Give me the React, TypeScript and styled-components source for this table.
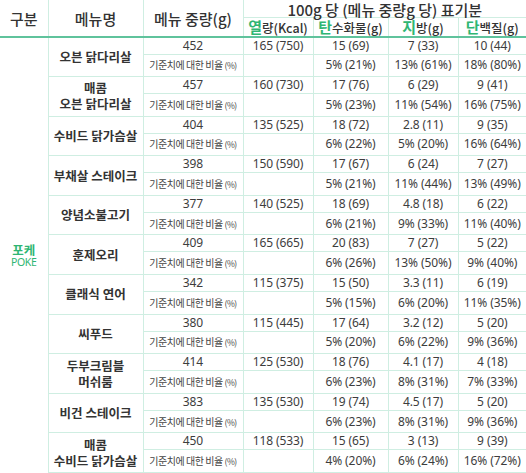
import React from "react";
import styled, { createGlobalStyle } from "styled-components";

const Global = createGlobalStyle`
  html, body { margin: 0; padding: 0; background: #fff; }
  body { font-family: "Noto Sans", "Noto Sans CJK KR", sans-serif; color: #333; }
`;

const LINE = "#cfeee2";
const GREEN_LINE = "#5fc39c";
const GREEN = "#2fb673";

const Table = styled.table`
  width: 526px;
  border-collapse: collapse;
  table-layout: fixed;
`;

const Col = styled.col<{ $w: number }>`
  width: ${(p) => p.$w}px;
`;

const HeadCell = styled.th`
  font-family: "Noto Sans CJK KR", "Noto Sans", sans-serif;
  font-weight: 500;
  font-size: 15px;
  color: #333;
  padding: 0;
  border-left: 1px solid ${LINE};
  border-bottom: 2px solid ${GREEN_LINE};
  vertical-align: middle;
  line-height: 1;
  &:first-child { border-left: none; }
`;

const TitleCell = styled.th`
  padding: 0;
  border-left: 1px solid ${LINE};
  border-bottom: 1px solid ${LINE};
  vertical-align: middle;
`;

const TitleBox = styled.div`
  height: 17px;
  line-height: 17px;
  padding-top: 1px;
  box-sizing: border-box;
  font-family: "Noto Sans CJK KR", "Noto Sans", sans-serif;
  font-weight: 500;
  font-size: 15px;
  color: #333;
  white-space: nowrap;
  text-align: center;
`;

const SubHeadCell = styled.th`
  padding: 0;
  border-left: 1px solid ${LINE};
  border-bottom: 2px solid ${GREEN_LINE};
  vertical-align: middle;
`;

const SubBox = styled.div`
  height: 18px;
  line-height: 18px;
  font-family: "Noto Sans CJK KR", "Noto Sans", sans-serif;
  font-weight: 500;
  font-size: 12.5px;
  color: #333;
  white-space: nowrap;
  text-align: center;
`;

const Initial = styled.span`
  color: ${GREEN};
  font-weight: 700;
  font-size: 15px;
`;

const ValueRow = styled.tr`
  height: 17px;
`;
const RatioRow = styled.tr`
  height: 22.6px;
`;

const GroupCell = styled.td`
  text-align: center;
  vertical-align: middle;
  padding: 0;
  color: ${GREEN};
  font-family: "Noto Sans CJK KR", "Noto Sans", sans-serif;
`;

const GroupName = styled.div`
  font-size: 12.5px;
  font-weight: 700;
  line-height: 13px;
`;

const GroupSub = styled.div`
  font-family: "Noto Sans", sans-serif;
  font-size: 10.5px;
  letter-spacing: -0.4px;
  line-height: 12px;
`;

const NameCell = styled.td`
  font-family: "Noto Sans CJK KR", "Noto Sans", sans-serif;
  font-weight: 700;
  font-size: 12.5px;
  color: #333;
  text-align: center;
  vertical-align: middle;
  line-height: 16px;
  padding: 0;
  border-left: 1px solid ${LINE};
  border-bottom: 1px solid ${LINE};
  white-space: nowrap;
`;

const ValueCell = styled.td`
  font-family: "Noto Sans", "Noto Sans CJK KR", sans-serif;
  font-size: 12px;
  color: #3d3d3d;
  text-align: center;
  vertical-align: middle;
  padding: 0;
  line-height: 1;
  border-left: 1px solid ${LINE};
  border-bottom: 1px solid ${LINE};
  white-space: nowrap;
  letter-spacing: -0.1px;
`;

const RatioLabel = styled(ValueCell)`
  font-family: "Noto Sans CJK KR", "Noto Sans", sans-serif;
  font-size: 10px;
  letter-spacing: -0.45px;
  color: #444;
`;

const Pct = styled.span`
  font-size: 8.5px;
`;

type Item = {
  name: string[];
  weight: string;
  kcal: string;
  vals: [string, string, string];
  pcts: [string, string, string];
};

const items: Item[] = [
  { name: ["오븐 닭다리살"], weight: "452", kcal: "165 (750)", vals: ["15 (69)", "7 (33)", "10 (44)"], pcts: ["5% (21%)", "13% (61%)", "18% (80%)"] },
  { name: ["매콤", "오븐 닭다리살"], weight: "457", kcal: "160 (730)", vals: ["17 (76)", "6 (29)", "9 (41)"], pcts: ["5% (23%)", "11% (54%)", "16% (75%)"] },
  { name: ["수비드 닭가슴살"], weight: "404", kcal: "135 (525)", vals: ["18 (72)", "2.8 (11)", "9 (35)"], pcts: ["6% (22%)", "5% (20%)", "16% (64%)"] },
  { name: ["부채살 스테이크"], weight: "398", kcal: "150 (590)", vals: ["17 (67)", "6 (24)", "7 (27)"], pcts: ["5% (21%)", "11% (44%)", "13% (49%)"] },
  { name: ["양념소불고기"], weight: "377", kcal: "140 (525)", vals: ["18 (69)", "4.8 (18)", "6 (22)"], pcts: ["6% (21%)", "9% (33%)", "11% (40%)"] },
  { name: ["훈제오리"], weight: "409", kcal: "165 (665)", vals: ["20 (83)", "7 (27)", "5 (22)"], pcts: ["6% (26%)", "13% (50%)", "9% (40%)"] },
  { name: ["클래식 연어"], weight: "342", kcal: "115 (375)", vals: ["15 (50)", "3.3 (11)", "6 (19)"], pcts: ["5% (15%)", "6% (20%)", "11% (35%)"] },
  { name: ["씨푸드"], weight: "380", kcal: "115 (445)", vals: ["17 (64)", "3.2 (12)", "5 (20)"], pcts: ["5% (20%)", "6% (22%)", "9% (36%)"] },
  { name: ["두부크림블", "머쉬룸"], weight: "414", kcal: "125 (530)", vals: ["18 (76)", "4.1 (17)", "4 (18)"], pcts: ["6% (23%)", "8% (31%)", "7% (33%)"] },
  { name: ["비건 스테이크"], weight: "383", kcal: "135 (530)", vals: ["19 (74)", "4.5 (17)", "5 (20)"], pcts: ["6% (23%)", "8% (31%)", "9% (36%)"] },
  { name: ["매콤", "수비드 닭가슴살"], weight: "450", kcal: "118 (533)", vals: ["15 (65)", "3 (13)", "9 (39)"], pcts: ["4% (20%)", "6% (24%)", "16% (72%)"] },
];

export default function App() {
  return (
    <>
      <Global />
      <Table>
        <colgroup>
          <Col $w={48} />
          <Col $w={95} />
          <Col $w={100} />
          <Col $w={70} />
          <Col $w={75} />
          <Col $w={70} />
          <Col $w={68} />
        </colgroup>
        <thead>
          <tr>
            <HeadCell rowSpan={2}>구분</HeadCell>
            <HeadCell rowSpan={2}>메뉴명</HeadCell>
            <HeadCell rowSpan={2}>메뉴 중량(g)</HeadCell>
            <TitleCell colSpan={4}>
              <TitleBox>100g 당 (메뉴 중량g 당) 표기분</TitleBox>
            </TitleCell>
          </tr>
          <tr>
            <SubHeadCell><SubBox><Initial>열</Initial>량(Kcal)</SubBox></SubHeadCell>
            <SubHeadCell><SubBox><Initial>탄</Initial>수화물(g)</SubBox></SubHeadCell>
            <SubHeadCell><SubBox><Initial>지</Initial>방(g)</SubBox></SubHeadCell>
            <SubHeadCell><SubBox><Initial>단</Initial>백질(g)</SubBox></SubHeadCell>
          </tr>
        </thead>
        <tbody>
          {items.map((it, i) => (
            <React.Fragment key={i}>
              <ValueRow>
                {i === 0 && (
                  <GroupCell rowSpan={items.length * 2}>
                    <GroupName>포케</GroupName>
                    <GroupSub>POKE</GroupSub>
                  </GroupCell>
                )}
                <NameCell rowSpan={2}>
                  {it.name.map((n, j) => (
                    <div key={j}>{n}</div>
                  ))}
                </NameCell>
                <ValueCell>{it.weight}</ValueCell>
                <ValueCell>{it.kcal}</ValueCell>
                {it.vals.map((v, j) => (
                  <ValueCell key={j}>{v}</ValueCell>
                ))}
              </ValueRow>
              <RatioRow>
                <RatioLabel>
                  기준치에 대한 비율 <Pct>(%)</Pct>
                </RatioLabel>
                <ValueCell />
                {it.pcts.map((v, j) => (
                  <ValueCell key={j}>{v}</ValueCell>
                ))}
              </RatioRow>
            </React.Fragment>
          ))}
        </tbody>
      </Table>
    </>
  );
}
